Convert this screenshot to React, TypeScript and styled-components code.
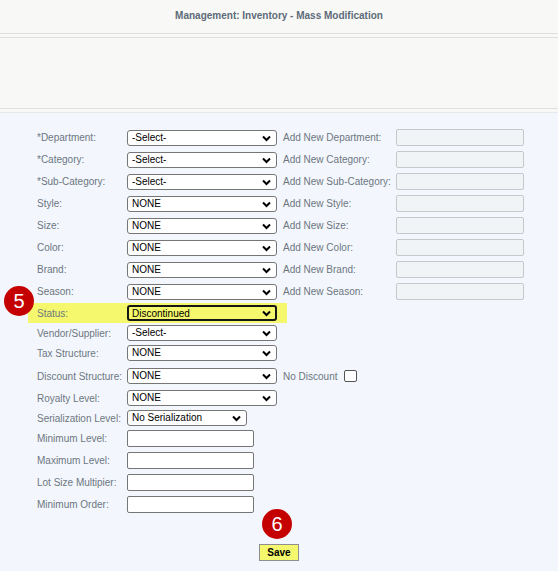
import React from 'react'
import styled, { createGlobalStyle } from 'styled-components'

const GlobalStyle = createGlobalStyle`
  html, body {
    margin: 0;
    padding: 0;
    background: #f3f7fd;
    font-family: "Liberation Sans", Arial, sans-serif;
  }
  * { box-sizing: border-box; }
`

const Page = styled.div`
  min-height: 571px;
  background: #f3f7fd;
`

const Header = styled.div`
  height: 34px;
  display: flex;
  align-items: center;
  justify-content: center;
  padding-bottom: 3px;
  background: #f8f8f6;
  border-bottom: 1px solid #dfdfdf;
`

const Title = styled.h1`
  margin: 0;
  font-size: 10px;
  font-weight: bold;
  color: #5d6b78;
`

const Band = styled.div<{ $h: number }>`
  height: ${({ $h }) => $h}px;
  background: #f8f8f6;
`

const Panel = styled.div`
  height: 72px;
  background: #f8f8f6;
  border-top: 1px solid #dfdfdf;
  border-bottom: 1px solid #dfdfdf;
`

const Body = styled.div`
  position: relative;
  border-top: 1px solid #e6e8ea;
  padding-top: 14px;
`

const Form = styled.div`
  padding-left: 28px;
`

const Row = styled.div<{ $highlight?: boolean; $pad?: string }>`
  display: grid;
  grid-template-columns: 90px 156px 113px 128px;
  align-items: center;
  padding: ${({ $pad }) => $pad || '2px 0 2px'};
  padding-left: 9px;
  width: ${({ $highlight }) => ($highlight ? '259px' : 'auto')};
  background: ${({ $highlight }) => ($highlight ? '#f5f86c' : 'transparent')};
`

const Label = styled.label`
  font-size: 10px;
  color: #6d7680;
  white-space: nowrap;
`

const SelectWrap = styled.div<{ $w: number }>`
  position: relative;
  width: ${({ $w }) => $w}px;
  height: 16px;
`

const Select = styled.select<{ $focus?: boolean }>`
  appearance: none;
  display: block;
  width: 100%;
  height: 100%;
  margin: 0;
  padding: 0 0 0 ${({ $focus }) => ($focus ? '3px' : '4px')};
  font-family: "Liberation Sans", Arial, sans-serif;
  font-size: 10px;
  line-height: 14px;
  color: #000;
  background: ${({ $focus }) => ($focus ? '#f5f86c' : '#fff')};
  border: ${({ $focus }) => ($focus ? '2px solid #161616' : '1px solid #767676')};
  border-radius: 3px;
  outline: none;
`

const Chevron = styled.svg`
  position: absolute;
  right: 6px;
  top: 5px;
  width: 9px;
  height: 7px;
  pointer-events: none;
`

const TextBox = styled.input<{ $muted?: boolean }>`
  display: block;
  width: ${({ $muted }) => ($muted ? '128px' : '127px')};
  height: 17px;
  margin: 0;
  padding: 0 3px;
  font-size: 10px;
  background: ${({ $muted }) => ($muted ? '#f0f4f6' : '#fff')};
  border: 1px solid ${({ $muted }) => ($muted ? '#c6c9cc' : '#767676')};
  border-radius: 2px;
  outline: none;
`

const CheckCell = styled.div`
  display: flex;
  align-items: center;
  gap: 7px;
`

const CheckBox = styled.span`
  display: inline-block;
  width: 13px;
  height: 12px;
  background: #fff;
  border: 1px solid #555;
  border-radius: 2px;
`

const Badge = styled.div<{ $x: number; $y: number }>`
  position: absolute;
  left: ${({ $x }) => $x}px;
  top: ${({ $y }) => $y}px;
  width: 30px;
  height: 30px;
  border-radius: 50%;
  background: #c40000;
  color: #fff;
  display: flex;
  align-items: center;
  justify-content: center;
  font-family: "Liberation Sans", Arial, sans-serif;
  font-size: 20px;
  line-height: 1;
`

const Footer = styled.div`
  display: flex;
  justify-content: center;
  padding-top: 28px;
  padding-bottom: 10px;
`

const SaveButton = styled.button`
  width: 40px;
  height: 17px;
  padding: 0;
  background: #f5f86c;
  border: 1px solid #8e8e8e;
  font-family: "Liberation Sans", Arial, sans-serif;
  font-size: 10px;
  font-weight: bold;
  color: #000;
`

const Drop = ({ value, width = 150, focus }: { value: string; width?: number; focus?: boolean }) => (
  <SelectWrap $w={width}>
    <Select $focus={focus} defaultValue={value}>
      <option>{value}</option>
    </Select>
    <Chevron viewBox="0 0 9 7">
      <path d="M1 1.5 L4.5 5 L8 1.5" fill="none" stroke="#000" strokeWidth="2" />
    </Chevron>
  </SelectWrap>
)

const withAdd = [
  ['*Department:', '-Select-', 'Department'],
  ['*Category:', '-Select-', 'Category'],
  ['*Sub-Category:', '-Select-', 'Sub-Category'],
  ['Style:', 'NONE', 'Style'],
  ['Size:', 'NONE', 'Size'],
  ['Color:', 'NONE', 'Color'],
  ['Brand:', 'NONE', 'Brand'],
  ['Season:', 'NONE', 'Season'],
]

const levels = ['Minimum Level:', 'Maximum Level:', 'Lot Size Multipier:', 'Minimum Order:']

export default function App() {
  return (
    <Page>
      <GlobalStyle />
      <Header>
        <Title>Management: Inventory - Mass Modification</Title>
      </Header>
      <Band $h={3} />
      <Panel />
      <Band $h={3} />
      <Body>
        <Form>
          {withAdd.map(([label, value, name]) => (
            <Row key={label} $pad="2px 0 3px">
              <Label>{label}</Label>
              <Drop value={value} />
              <Label>Add New {name}:</Label>
              <TextBox $muted />
            </Row>
          ))}
          <Row $highlight>
            <Label>Status:</Label>
            <Drop value="Discontinued" focus />
          </Row>
          <Row>
            <Label>Vendor/Supplier:</Label>
            <Drop value="-Select-" />
          </Row>
          <Row>
            <Label>Tax Structure:</Label>
            <Drop value="NONE" />
          </Row>
          <Row $pad="5px 0 4px">
            <Label>Discount Structure:</Label>
            <Drop value="NONE" />
            <CheckCell>
              <Label>No Discount</Label>
              <CheckBox />
            </CheckCell>
          </Row>
          <Row>
            <Label>Royalty Level:</Label>
            <Drop value="NONE" />
          </Row>
          <Row>
            <Label>Serialization Level:</Label>
            <Drop value="No Serialization" width={120} />
          </Row>
          {levels.map((label) => (
            <Row key={label} $pad="2px 0 3px">
              <Label>{label}</Label>
              <TextBox />
            </Row>
          ))}
        </Form>
        <Footer>
          <SaveButton>Save</SaveButton>
        </Footer>
        <Badge $x={4} $y={173}>5</Badge>
        <Badge $x={262} $y={396}>6</Badge>
      </Body>
    </Page>
  )
}
